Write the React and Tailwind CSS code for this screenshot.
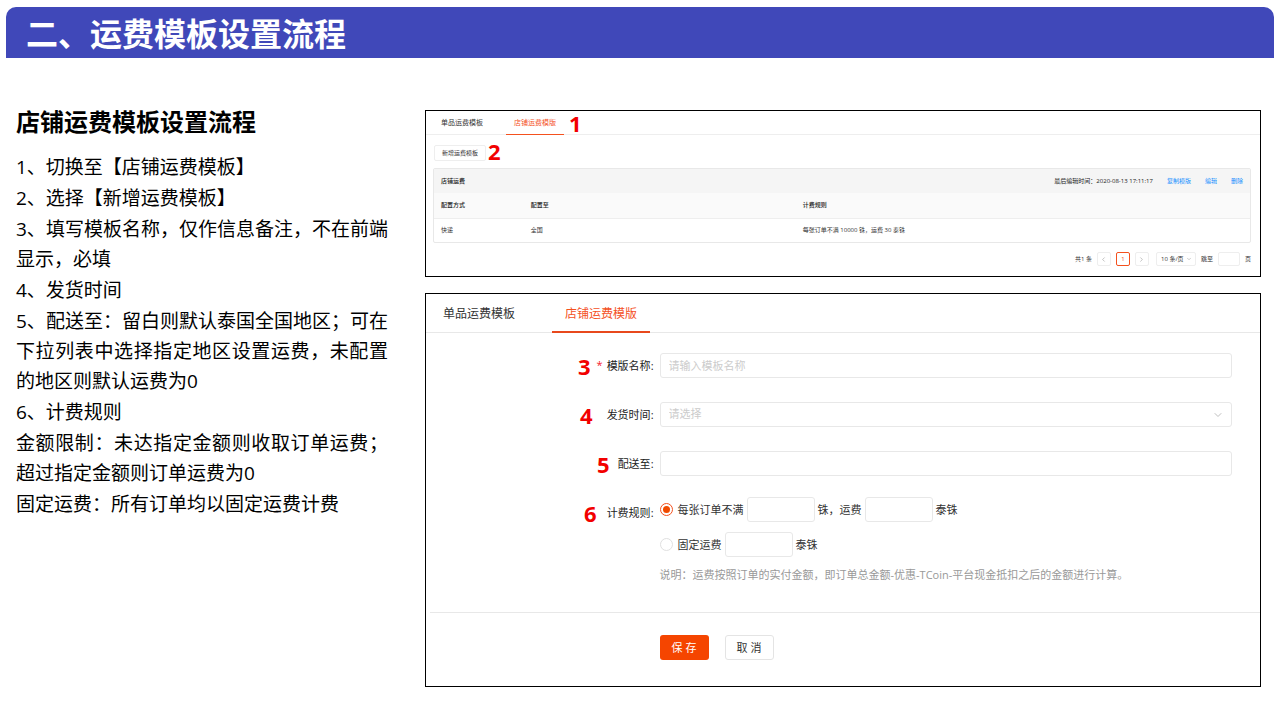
import { useState } from "react";
import { ChevronDown, ChevronLeft, ChevronRight } from "lucide-react";

const steps = [
  "1、切换至【店铺运费模板】",
  "2、选择【新增运费模板】",
  "3、填写模板名称，仅作信息备注，不在前端显示，必填",
  "4、发货时间",
  "5、配送至：留白则默认泰国全国地区；可在下拉列表中选择指定地区设置运费，未配置的地区则默认运费为0",
  "6、计费规则",
  "金额限制：未达指定金额则收取订单运费；超过指定金额则订单运费为0",
  "固定运费：所有订单均以固定运费计费",
];

const fieldClass = "h-[25px] rounded-[3px] border border-[#e8e8e8] bg-white px-2 text-[11px] outline-none";

// Red step number shown beside a control
function Step({ n, className = "" }) {
  return (
    <span className={`text-[22px] leading-none font-bold text-[#f20000] ${className}`}>{n}</span>
  );
}

function FormRow({ n, gap, label, htmlFor, required, children }) {
  return (
    <div className="flex">
      <div className="flex h-[25px] w-[28%] items-center justify-end pr-[6px]">
        <Step n={n} className={gap} />
        {required && <span className="mr-1 text-[11px] text-[#f5222d]">*</span>}
        <label htmlFor={htmlFor} className="pt-0.5 text-[11px] text-[#222222]">
          {label}:
        </label>
      </div>
      {children}
    </div>
  );
}

/**
 * List page: shop templates with the "add" button
 */
function TemplateList() {
  return (
    <section className="border border-black pb-[10px] text-[6px] text-[#333333]">
      <div className="flex h-6 items-stretch gap-[15px] border-b border-[#eeeeee] pl-[7px] text-[7px]">
        <button className="px-2 pt-0.5">单品运费模板</button>
        <div className="flex items-center gap-[5px]">
          <button className="-mb-px self-stretch border-b border-[#f4511e] px-2 pt-0.5 text-[#f4511e]">
            店铺运费模版
          </button>
          <Step n="1" />
        </div>
      </div>

      <div className="mt-[5px] flex h-[25px] items-start gap-0.5 pl-2">
        <button className="mt-[5px] h-4 rounded-xs border border-[#eeeeee] px-[7px]">新增运费模板</button>
        <Step n="2" />
      </div>

      <div className="mt-[3px] mr-[9px] ml-[7px] rounded-xs border border-[#e8e8e8]">
        <div className="flex h-6 items-center bg-[#f5f5f5] px-[7px] text-[#222222]">
          <span className="font-medium">店铺运费</span>
          <span className="ml-auto">最后编辑时间：2020-08-13 17:11:17</span>
          <div className="ml-[14px] flex gap-[14px] text-[#1890ff]">
            <a href="#copy">复制模版</a>
            <a href="#edit">编辑</a>
            <a href="#delete">删除</a>
          </div>
        </div>
        <table className="w-full table-fixed text-left">
          <thead>
            <tr className="h-[25px] border-b border-[#eeeeee] bg-[#fafafa] text-[#222222]">
              <th className="w-[11%] px-[7px] font-medium">配置方式</th>
              <th className="w-1/3 px-[7px] font-medium">配置至</th>
              <th className="px-[7px] font-medium">计费规则</th>
            </tr>
          </thead>
          <tbody>
            <tr className="h-6">
              <td className="px-[7px]">快递</td>
              <td className="px-[7px]">全国</td>
              <td className="px-[7px]">每张订单不满 10000 铢，运费 30 泰铢</td>
            </tr>
          </tbody>
        </table>
      </div>

      <div className="mt-[9px] mr-[9px] flex h-[14px] items-stretch justify-end gap-[5px] leading-[14px]">
        <span>共1 条</span>
        <button aria-label="上一页" className="flex w-[14px] items-center justify-center rounded-xs border border-[#eeeeee] text-[#999999]">
          <ChevronLeft size={7} />
        </button>
        <button className="w-[14px] rounded-xs border border-[#f4511e] leading-3 text-[#f4511e]">1</button>
        <button aria-label="下一页" className="flex w-[14px] items-center justify-center rounded-xs border border-[#eeeeee] text-[#999999]">
          <ChevronRight size={7} />
        </button>
        <div className="relative ml-0.5 flex">
          <select aria-label="每页条数" className="w-10 appearance-none rounded-xs border border-[#eeeeee] pl-1 leading-3">
            <option>10 条/页</option>
          </select>
          <ChevronDown size={6} className="pointer-events-none absolute top-1 right-1 text-[#999999]" />
        </div>
        <label htmlFor="jump">跳至</label>
        <input id="jump" className="w-[22px] rounded-xs border border-[#eeeeee]" />
        <span>页</span>
      </div>
    </section>
  );
}

/**
 * Edit page: form of a shop template
 */
function TemplateForm() {
  const [rule, setRule] = useState("limit");
  const radioClass =
    "h-[13px] w-[13px] appearance-none rounded-full border border-[#e0e0e0] bg-clip-content p-[2px] checked:border-[#f4511e] checked:bg-[#f04a00]";

  return (
    <section className="border border-black text-[11px] text-[#333333]">
      <div className="flex h-[39px] items-stretch gap-6 border-b border-[#e8e8e8] pl-1 text-xs">
        <button className="px-[13px] pt-0.5">单品运费模板</button>
        <button className="-mb-px border-b-2 border-[#e8481c] px-[13px] pt-0.5 text-[#f4511e]">店铺运费模版</button>
      </div>

      <form onSubmit={(e) => e.preventDefault()}>
        <div className="flex flex-col gap-6 pt-5">
          <FormRow n="3" gap="mr-1.5" label="模版名称" htmlFor="name" required>
            <input id="name" placeholder="请输入模板名称" className={`mr-7 flex-1 placeholder:text-[#cccccc] ${fieldClass}`} />
          </FormRow>
          <FormRow n="4" gap="mr-3.5" label="发货时间" htmlFor="time">
            <div className="relative mr-7 flex flex-1">
              <select id="time" className={`w-full appearance-none text-[#cccccc] ${fieldClass}`}>
                <option>请选择</option>
              </select>
              <ChevronDown size={12} className="pointer-events-none absolute top-[7px] right-2 text-[#bfbfbf]" />
            </div>
          </FormRow>
          <FormRow n="5" gap="mr-2" label="配送至" htmlFor="region">
            <input id="region" className={`mr-7 flex-1 ${fieldClass}`} />
          </FormRow>
          <FormRow n="6" gap="mr-2.5" label="计费规则" htmlFor="limit">
            <div className="-mt-[3px] flex flex-col gap-[10px]">
              <div className="flex items-center">
                <input
                  id="limit"
                  type="radio"
                  name="rule"
                  checked={rule === "limit"}
                  onChange={() => setRule("limit")}
                  className={radioClass}
                />
                <label htmlFor="limit" className="ml-[5px] pt-0.5">每张订单不满</label>
                <input aria-label="订单金额" className={`mx-[3px] w-[68px] ${fieldClass}`} />
                <span className="pt-0.5">铢，运费</span>
                <input aria-label="运费" className={`mx-[3px] w-[68px] ${fieldClass}`} />
                <span className="pt-0.5">泰铢</span>
              </div>
              <div className="flex items-center">
                <input
                  id="fixed"
                  type="radio"
                  name="rule"
                  checked={rule === "fixed"}
                  onChange={() => setRule("fixed")}
                  className={radioClass}
                />
                <label htmlFor="fixed" className="ml-[5px] pt-0.5">固定运费</label>
                <input aria-label="固定运费金额" className={`mx-[3px] w-[68px] ${fieldClass}`} />
                <span className="pt-0.5">泰铢</span>
              </div>
              <p className="-mt-0.5 leading-5 text-[#999999]">
                说明：运费按照订单的实付金额，即订单总金额-优惠-TCoin-平台现金抵扣之后的金额进行计算。
              </p>
            </div>
          </FormRow>
        </div>

        <div className="mt-[27px] ml-1 border-t border-[#e8e8e8]" />
        <div className="ml-[28%] flex gap-4 pt-[22px] pb-[26px]">
          <button type="submit" className="h-[25px] w-[49px] rounded-[3px] bg-[#f54500] pt-0.5 text-white">保 存</button>
          <button type="button" className="h-[25px] w-[49px] rounded-[3px] border border-[#e4e4e4] pt-0.5">取 消</button>
        </div>
      </form>
    </section>
  );
}

export default function App() {
  return (
    <main lang="zh-CN" className="bg-white font-['Open_Sans','Noto_Sans_CJK_SC',sans-serif] text-black">
      <header className="mx-[6px] mt-[7px] flex h-[51px] items-center rounded-t-[10px] bg-[#4048b9] pt-0.5 pl-5">
        <h1 className="text-[32px] leading-none font-bold text-white">二、运费模板设置流程</h1>
      </header>

      <div className="flex items-start gap-[37px] pt-[52px] pr-[19px] pl-4">
        <article className="w-[372px] shrink-0">
          <h2 className="text-2xl leading-6 font-bold">店铺运费模板设置流程</h2>
          <div className="mt-[18px] flex flex-col gap-px text-justify text-[19px] leading-[30px]">
            {steps.map((step) => (
              <p key={step}>{step}</p>
            ))}
          </div>
        </article>

        <div className="flex min-w-0 flex-1 flex-col gap-4">
          <TemplateList />
          <TemplateForm />
        </div>
      </div>
    </main>
  );
}
